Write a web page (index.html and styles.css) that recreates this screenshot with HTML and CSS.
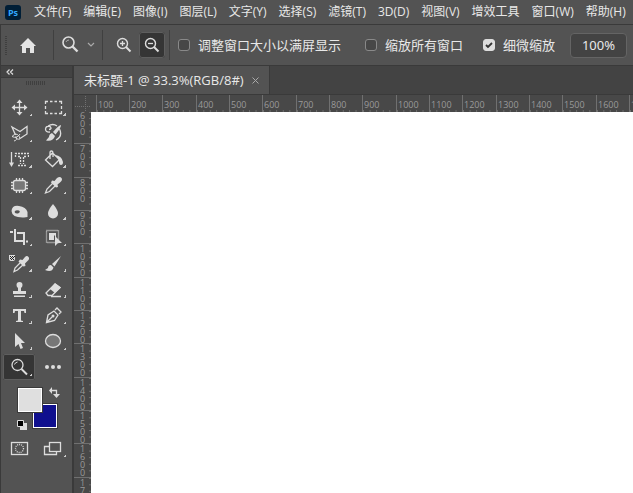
FILE: index.html
```html
<!DOCTYPE html>
<html lang="zh-CN">
<head>
<meta charset="utf-8">
<title>未标题-1</title>
<link rel="stylesheet" href="styles.css">
</head>
<body>
<div class="app">
  <nav class="menubar">
    <svg class="logo" viewBox="0 0 16 15" role="img" aria-label="Ps"><rect width="16" height="15" rx="3" fill="#001e36"/><text x="8" y="11" text-anchor="middle" class="logo-text">Ps</text></svg>
    <button>文件(F)</button><button>编辑(E)</button><button>图像(I)</button><button>图层(L)</button><button>文字(Y)</button><button>选择(S)</button><button>滤镜(T)</button><button>3D(D)</button><button>视图(V)</button><button>增效工具</button><button>窗口(W)</button><button>帮助(H)</button>
  </nav>

  <header class="options">
    <span class="grip"></span>
    <button class="home" aria-label="主页"><svg width="16" height="15" viewBox="0 0 16 15"><path d="M8 0 16 8H14V15H10V10H6V15H2V8H0Z" fill="#e4e4e4"/></svg></button>
    <button class="current" aria-label="缩放工具">
      <svg width="18" height="18" viewBox="0 0 18 18" fill="none" stroke="#ddd"><circle cx="6.500" cy="6.500" r="5.500" stroke-width="1.6"/><path d="M4 6Q4.500 4 7 4" stroke="#aaa"/><path d="M10.500 10.500 15.500 15.500" stroke-width="2.4"/></svg>
      <svg width="8" height="6" viewBox="0 0 8 6" fill="none" stroke="#aaa" stroke-width="1.2"><path d="M1 1 4 4 7 1"/></svg>
    </button>
    <div class="modes">
      <button aria-label="放大"><svg width="16" height="16" viewBox="0 0 16 16" fill="none" stroke="#ddd"><circle cx="6.500" cy="6.500" r="5" stroke-width="1.4"/><path d="M4 6.500H9M6.500 4V9" stroke-width="1.3"/><path d="M10 10 14.500 14.500" stroke-width="2"/></svg></button>
      <button class="active" aria-label="缩小"><svg width="16" height="16" viewBox="0 0 16 16" fill="none" stroke="#ddd"><circle cx="6.500" cy="6.500" r="5" stroke-width="1.4"/><path d="M4 6.500H9" stroke-width="1.3"/><path d="M10 10 14.500 14.500" stroke-width="2"/></svg></button>
    </div>
    <label class="fit"><input type="checkbox">调整窗口大小以满屏显示</label>
    <label class="all"><input type="checkbox">缩放所有窗口</label>
    <label class="scrubby"><input type="checkbox" checked>细微缩放</label>
    <button class="percent">100%</button>
  </header>

  <div class="work">
    <aside class="tools">
      <button class="collapse" aria-label="折叠"><svg width="8" height="6" viewBox="0 0 8 6" fill="none" stroke="#ddd" stroke-width="1.2"><path d="M3.500 .5 1 3 3.500 5.500M7 .5 4.500 3 7 5.500"/></svg></button>
      <div class="hgrip"></div>
      <div class="toolgrid">
        <button aria-label="移动"><svg viewBox="0 0 20 20"><path d="M10.500 4V17M4 10.500H17" class="l"/><path d="M10.500 2.500 13.500 6H7.500ZM10.500 18.500 13.500 15H7.500ZM2.500 10.500 6 7.500V13.500ZM18.500 10.500 15 7.500V13.500Z" class="f"/></svg></button>
        <button aria-label="矩形选框"><svg viewBox="0 0 20 20"><path d="M2.500 7V4.500H5M7 4.500H9.500M11.500 4.500H14M16 4.500H18.500V7M18.500 9V12M18.500 14V16.500H16M14 16.500H11.500M9.500 16.500H7M5 16.500H2.500V14M2.500 12V9" class="l"/></svg></button>
        <button aria-label="多边形套索"><svg viewBox="0 0 20 20"><path d="M6.500 12 3 4 11 8.500 18 3.500V11L11 15.500" class="l"/><path d="M3 13.500Q6 9.500 8.500 11.500T11 16Q7 17 7 13.500M3 13.500Q8 16 11 11M6.500 14Q9 17 5 18" class="l thin"/></svg></button>
        <button aria-label="历史记录画笔"><svg viewBox="0 0 20 20"><path d="M7 9Q2.500 9.500 2.500 6 3 2.500 7 3.500 9.500 6 6 6.500M5 3Q10 0 14 3M16.500 6Q20 13 13 17" class="l"/><path d="M18 2Q16 2 10 9L12.500 11.500Q18 5 18 2ZM9 10Q6 11 6 14L3 17.500Q10 19 12 13Z" class="f"/></svg></button>
        <button aria-label="直排文字蒙版"><svg viewBox="0 0 20 20"><path d="M2.500 3V15" class="l"/><path d="M0 13.500H5L2.500 18Z" class="f"/><path d="M6.500 8V4.500H19.500V8M17 7.500H14.500V15M9 7.500H11.500V15M9 16.500H17" class="l dash"/></svg></button>
        <button aria-label="油漆桶"><svg viewBox="0 0 20 20"><path d="M2.500 11 9.500 4 16.500 10.500 9.500 17.500ZM7 10V4Q7 2 8.500 2T10 4V8" class="l"/><path d="M12 6Q19 7 20 13 20 16 18 16T16 13Q16 10 12 6Z" class="f"/></svg></button>
        <button aria-label="画框"><svg viewBox="0 0 20 20"><rect x="4.500" y="5.500" width="12" height="10" rx="2" fill="#777" class="l"/><path d="M7.500 3V5M10.500 3V5M13.500 3V5M7.500 16V18M10.500 16V18M13.500 16V18M2 7.500H4M2 10.500H4M2 13.500H4M17 7.500H19M17 10.500H19M17 13.500H19" class="l"/></svg></button>
        <button aria-label="吸管"><svg viewBox="0 0 20 20"><path d="M10 8 4 14 2.500 18 6.500 16.500 12.500 10.500" class="l"/><path d="M9 5.500 11.500 6 14 3Q17 1 18.500 3T17 7.500L14.500 9.500 15 12 13 12.500 8 7.500Z" class="f"/></svg></button>
        <button aria-label="海绵"><svg viewBox="0 0 20 20"><path fill-rule="evenodd" d="M2.500 10Q3 4 10 5 17 6 18.500 11V16L15 16.500Q3 17 2.500 10ZM5.500 11Q6.500 13 9 12.500 12 11 10 9.500 6 8.500 5.500 11Z" class="f"/></svg></button>
        <button aria-label="模糊"><svg viewBox="0 0 20 20"><path d="M10 3Q15 9 15 12.500A5 5 0 0 1 5 12.500Q5 9 10 3Z" class="f"/></svg></button>
        <button aria-label="裁剪"><svg viewBox="0 0 20 20"><path d="M1 5H4M6 2V14H14M8 6H15V18M17 14.500H19" class="l thick"/></svg></button>
        <button aria-label="对象选择"><svg viewBox="0 0 20 20"><rect x="3.500" y="3.500" width="12" height="12" class="l dot"/><path d="M6 6H13V10L11 8V13H6ZM12 9 19 16H15L12 19Z" class="f"/></svg></button>
        <button aria-label="颜色取样器"><svg viewBox="0 0 20 20"><path d="M12 9 6 15 5 18.500 8.500 17 15 11" class="l"/><path d="M11 6.500 13.500 7 16 4Q18 2 19.500 4T18.500 8L16 10.500 16.500 13 14.500 13.500 9.500 8.500Z" class="f"/><path d="M0 2H6V6Q6 8 3 8T0 6Z" class="f"/><path d="M1 3H2V4H1ZM3 3H4V4H3ZM5 3H6V4H5ZM2 4H3V5H2ZM4 4H5V5H4ZM1 5H2V6H1ZM3 5H4V6H3ZM2 6H3V7H2ZM4 6H5V7H4Z" fill="#222"/></svg></button>
        <button aria-label="画笔"><svg viewBox="0 0 20 20"><path d="M18 3 9 11 11.500 13.500ZM8 12Q5 12 5 15L2 17Q9 20 10.500 14.500Z" class="f"/></svg></button>
        <button aria-label="仿制图章"><svg viewBox="0 0 20 20"><path d="M7.500 6Q7.500 3 10.500 3T13.500 6Q13.500 8 12 9V12H17V15H4V12H9V9Q7.500 8 7.500 6ZM5 16.500H16V18H5Z" class="f"/></svg></button>
        <button aria-label="橡皮擦"><svg viewBox="0 0 20 20"><path d="M3 14 12 5 17 8.500 9 16.500H5ZM8 17.500H18" class="l"/><path d="M7 10 12 4 18 8.500 12 14Z" class="f"/></svg></button>
        <button aria-label="文字"><svg viewBox="0 0 20 20"><path d="M4 4H17V8H15.500L15 6H12V15.500L14 16V17H7V16L9 15.500V6H6L5.500 8H4Z" class="f"/></svg></button>
        <button aria-label="钢笔"><svg viewBox="0 0 20 20"><path d="M3.500 17.500 5 10 11 6 15 10 11.500 15.500ZM3.500 17.500 9 12M12 5 14 3 18 7 16 9" class="l"/><circle cx="10" cy="11" r="1.500" class="f"/></svg></button>
        <button aria-label="路径选择"><svg viewBox="0 0 20 20"><path d="M6 2 16 12H12L14 17 11.500 18 9.500 13 6 16Z" class="f"/></svg></button>
        <button aria-label="椭圆"><svg viewBox="0 0 20 20"><ellipse cx="10" cy="10" rx="7.500" ry="6.500" fill="#777" class="l"/></svg></button>
        <button class="active" aria-label="缩放"><svg viewBox="0 0 20 20"><circle cx="8.500" cy="8" r="5.500" class="l"/><path d="M5.500 7.500Q6 5.500 8.500 5" class="l thin"/><path d="M12.500 12 18 17.500" class="l thick"/></svg></button>
        <button class="plain" aria-label="编辑工具栏"><svg viewBox="0 0 20 20"><circle cx="4" cy="10" r="2" class="f"/><circle cx="10" cy="10" r="2" class="f"/><circle cx="16" cy="10" r="2" class="f"/></svg></button>
      </div>
      <svg class="colors" viewBox="0 0 72 50" role="img" aria-label="前景色和背景色">
        <path d="M32 23H58V49H32Z" fill="#3a3a3a"/><path d="M33 24H57V48H33Z" fill="#fff"/><path d="M34 25H56V47H34Z" fill="#10108e"/>
        <path d="M17 7H43V33H17Z" fill="#3a3a3a"/><path d="M18 8H42V32H18Z" fill="#fff"/><path d="M19 9H41V31H19Z" fill="#dfdfdf"/>
        <path d="M51 10.500H56.500V15" class="l"/><path d="M49 10.500 52 7V14ZM56.500 18 53 14H60Z" class="f"/>
        <path d="M20 43H27V50H20Z" fill="#ddd"/><path d="M17.500 40.500H23.500V46.500H17.500Z" fill="#000" stroke="#ddd"/>
      </svg>
      <div class="screen">
        <button aria-label="快速蒙版"><svg viewBox="0 0 20 20"><rect x="2.500" y="4.500" width="16" height="12" class="l"/><circle cx="10.500" cy="10.500" r="4" class="l dot"/></svg></button>
        <button aria-label="屏幕模式"><svg viewBox="0 0 20 20"><path d="M6 8.500H1.500V16.500H13.500V14" class="l"/><rect x="6.500" y="4.500" width="11" height="9" class="l"/></svg></button>
      </div>
    </aside>

    <main class="document">
      <div class="tabs"><div class="tab">未标题-1 @ 33.3%(RGB/8#)<button aria-label="关闭"><svg width="7" height="7" viewBox="0 0 7 7" stroke="#aaa"><path d="M.5 .5 6.500 6.500M6.500 .5 .5 6.500"/></svg></button></div></div>
      <div class="canvas-grid">
        <div class="corner"><svg width="17" height="17" viewBox="0 0 17 17"><path d="M1 11.500H17M11.500 1V17" stroke="#707070" stroke-dasharray="1 1"/></svg></div>
        <div class="ruler-x"><span>100</span><span>200</span><span>300</span><span>400</span><span>500</span><span>600</span><span>700</span><span>800</span><span>900</span><span>1000</span><span>1100</span><span>1200</span><span>1300</span><span>1400</span><span>1500</span><span>1600</span><span>1700</span></div>
        <div class="ruler-y"><span>600</span><span>700</span><span>800</span><span>900</span><span>1000</span><span>1100</span><span>1200</span><span>1300</span><span>1400</span><span>1500</span><span>1600</span><span>1700</span></div>
        <div class="canvas"></div>
      </div>
    </main>
  </div>
</div>
</body>
</html>
```
FILE: styles.css
```css
* { box-sizing: border-box; }
body { margin: 0; background: #535353; color: #e8e8e8; font: 12px/16px "Open Sans", "Noto Sans CJK SC", sans-serif; }
button { margin: 0; padding: 0; border: 0; background: none; color: inherit; font: inherit; white-space: nowrap; }
svg { display: block; flex: none; }
.app { display: flex; flex-direction: column; height: 100vh; overflow: hidden; }
.menubar { display: flex; align-items: center; gap: 12px; height: 25px; flex: none; padding-left: 5px; border-bottom: 1px solid #3a3a3a; }
.logo { width: 16px; height: 15px; margin-right: 1px; }
.logo-text { font: bold 9px "Open Sans", sans-serif; fill: #31a8ff; }
.options { display: flex; align-items: center; height: 41px; flex: none; padding: 0 6px 0 4px; border-bottom: 1px solid #3a3a3a; border-left: 1px solid #3a3a3a; }
.grip { width: 2px; height: 19px; background: repeating-linear-gradient(#3f3f3f 0 1px, transparent 1px 2px); }
.home { padding: 0 17px 0 13px; border-right: 1px solid #404040; height: 30px; }
.current { display: flex; align-items: center; gap: 7px; height: 30px; padding: 0 7px 0 8px; border-right: 1px solid #404040; }
.modes { display: flex; align-items: center; gap: 2px; height: 30px; padding: 0 4px 0 8px; border-right: 1px solid #404040; }
.modes button { display: grid; place-items: center; width: 26px; height: 26px; border-radius: 3px; }
.active { background: #353535; outline: 1px solid #5e5e5e; outline-offset: -1px; }
label { display: flex; align-items: center; gap: 8px; font-size: 13px; white-space: nowrap; }
input { appearance: none; width: 12px; height: 12px; margin: 0; border: 1px solid #898989; border-radius: 3px; background: #474747; }
input:checked { border-color: #ddd; background: #ddd url("data:image/svg+xml,%3Csvg xmlns='http://www.w3.org/2000/svg' viewBox='0 0 10 10'%3E%3Cpath d='M2 5l2 2 4-4' fill='none' stroke='%23333' stroke-width='1.8'/%3E%3C/svg%3E"); }
.fit { margin-left: 8px; }
.all { margin-left: 24px; }
.scrubby { margin-left: 20px; }
.percent { width: 57px; height: 25px; margin-left: auto; border: 1px solid #646464; border-radius: 4px; background: #434343; font-family: "Noto Sans", sans-serif; font-size: 13px; }
.work { display: flex; flex: 1; min-height: 0; }
.tools { width: 74px; flex: none; border: solid #3a3a3a; border-width: 0 2px 0 1px; display: flex; flex-direction: column; }
.collapse { height: 12px; padding-left: 5px; background: #434343; border-bottom: 1px solid #3a3a3a; }
.hgrip { width: 20px; height: 4px; margin: 3px 0 9px 25px; background: repeating-linear-gradient(90deg, #3f3f3f 0 1px, transparent 1px 2px); }
.toolgrid { display: grid; grid-template-columns: 32px 32px; grid-auto-rows: 26px; column-gap: 2px; padding-left: 2px; }
.toolgrid button, .screen button { position: relative; display: grid; place-items: center; border-radius: 2px; }
.toolgrid svg, .screen svg { width: 20px; height: 20px; }
.toolgrid button:not(.plain)::after, .screen button + button::after { content: ""; position: absolute; right: 3px; bottom: 4px; border: solid transparent; border-width: 3px 0 0 3px; border-right: 3px solid #ccc; border-right-width: 0; border-bottom: 3px solid #ccc; border-bottom-width: 0; width: 3px; height: 3px; background: linear-gradient(135deg, transparent 50%, #ccc 50%); border: 0; }
.f { fill: #ddd; }
.l { stroke: #ddd; stroke-width: 1.3; }
.l:not([fill]) { fill: none; }
.thin { stroke-width: 1; }
.thick { stroke-width: 2; }
.dot { stroke-dasharray: 1 1; }
.dash { stroke-dasharray: 2 1; }
.colors { width: 72px; height: 50px; margin-left: -1px; }
.screen { display: grid; grid-template-columns: 32px 32px; column-gap: 2px; padding: 5px 0 0 2px; grid-auto-rows: 26px; }
.document { display: flex; flex: 1; flex-direction: column; min-width: 0; }
.tabs { display: flex; height: 29px; flex: none; background: #434343; border-bottom: 1px solid #3a3a3a; }
.tab { display: flex; align-items: center; gap: 8px; padding: 0 10px; background: #535353; border-right: 1px solid #3a3a3a; font-size: 13px; white-space: nowrap; }
.canvas-grid { display: grid; grid-template: 17px 1fr / 17px 1fr; flex: 1; min-height: 0; }
.corner { background: #484848; }
.ruler-x, .ruler-y { display: grid; overflow: hidden; background: #484848; color: #9a9a9a; font: 9px/8px "Open Sans", sans-serif; }
.ruler-x { grid-template-columns: repeat(6, 33px 33px 34px); padding-left: 5px; }
.ruler-x span { border-left: 1px solid #707070; padding: 6px 0 0 1px; background: linear-gradient(90deg, #707070 1px, transparent 1px) bottom left / 20% 2px repeat-x; }
.ruler-y { grid-template-rows: 31px repeat(6, 34px 33px 33px); }
.ruler-y span { width: 17px; padding: 1px 5px 0 6px; border-top: 1px solid #707070; word-break: break-all; background: linear-gradient(#707070 1px, transparent 1px) top right / 2px 20% repeat-y; }
.ruler-y span:first-child { padding-top: 0; border-top: 0; }
.canvas { background: #fff; }
```
